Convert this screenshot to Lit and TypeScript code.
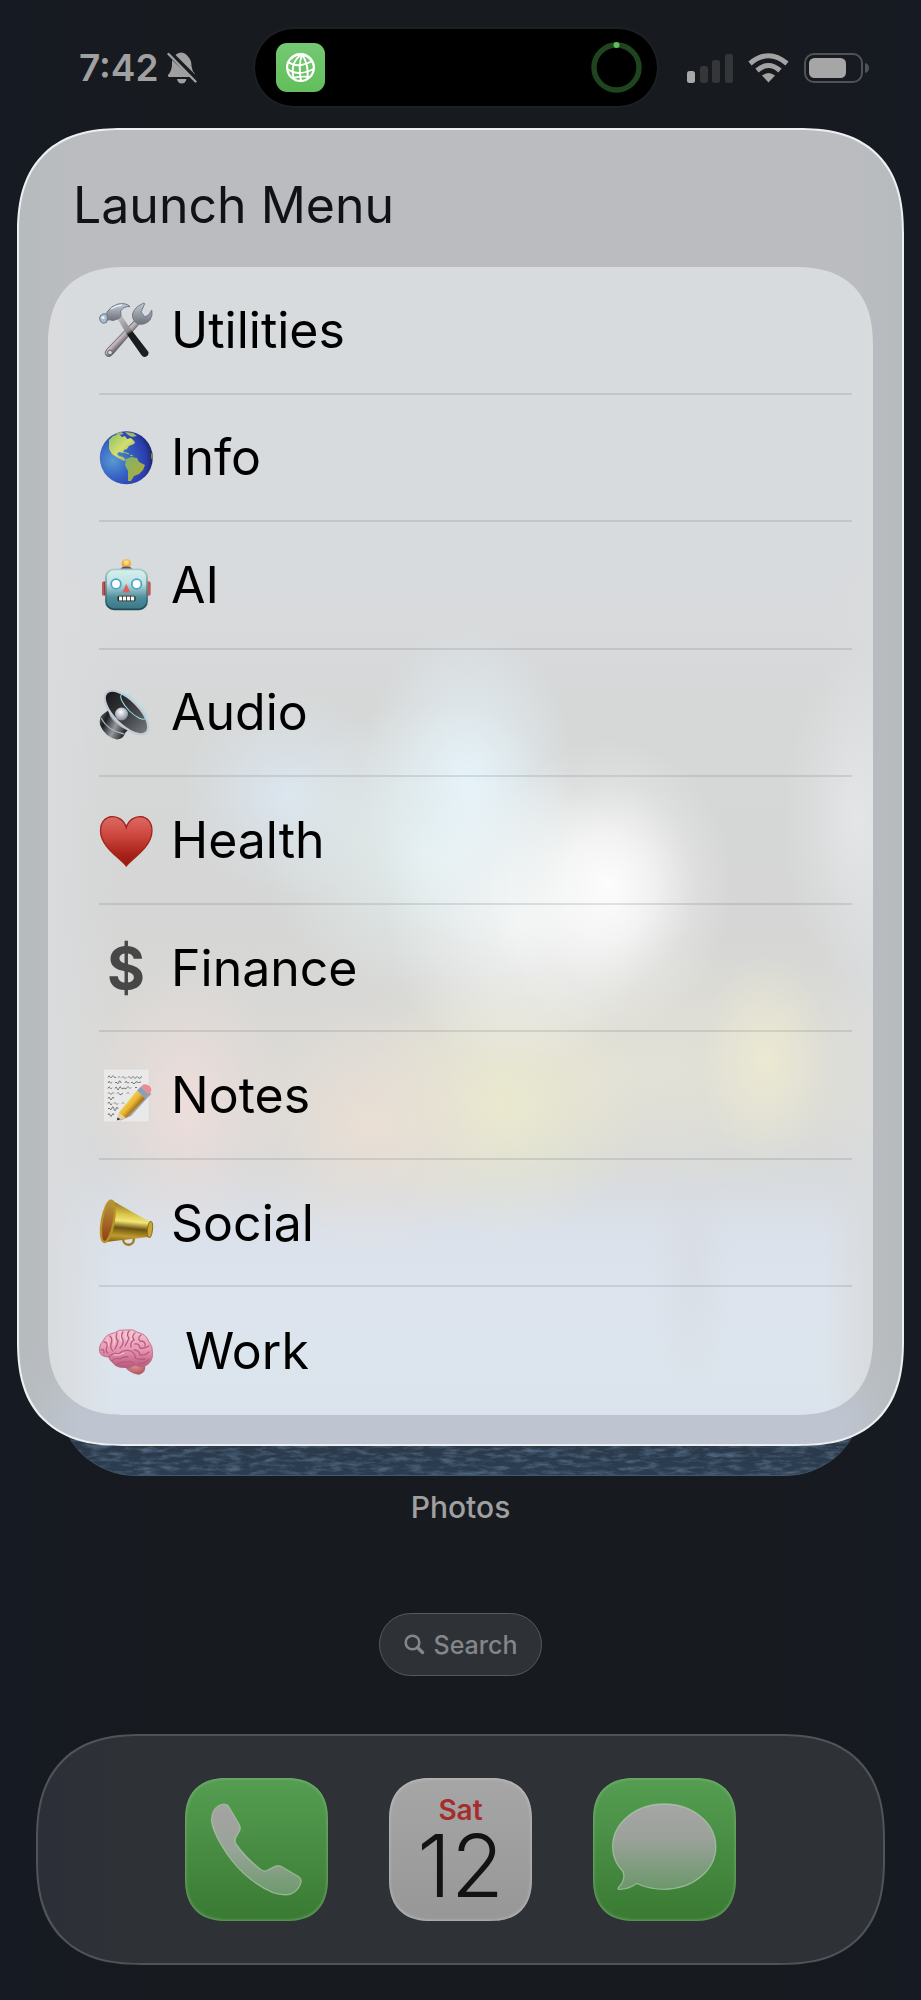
import { LitElement, html, css } from "lit";
import type { TemplateResult } from "lit";
import { customElement, property } from "lit/decorators.js";

const tools = html`<svg viewBox="0 0 54 54" aria-hidden="true">
  <defs>
    <linearGradient id="steel" x1="0" y1="0" x2="0" y2="1"><stop offset="0" stop-color="#c3ccd6" /><stop offset="1" stop-color="#6c717a" /></linearGradient>
    <linearGradient id="shaft" gradientUnits="userSpaceOnUse" x1="16" y1="32" x2="24" y2="40"><stop offset="0" stop-color="#6f6970" /><stop offset=".5" stop-color="#c4bcc2" /><stop offset="1" stop-color="#6b6167" /></linearGradient>
    <linearGradient id="grip" gradientUnits="userSpaceOnUse" x1="22" y1="14" x2="44" y2="50"><stop offset="0" stop-color="#b9b9bb" /><stop offset=".38" stop-color="#8a8a8c" /><stop offset=".45" stop-color="#17181a" /><stop offset="1" stop-color="#1d1f21" /></linearGradient>
  </defs>
  <path d="M36 17 L40 21 L14 51 Q11 55 7.500 53 Q4.500 50.500 7.500 46.500 Z" fill="url(#shaft)" stroke="#625d62" stroke-width=".8" />
  <path d="M42 1.500 Q46 -1 45.500 1 L42 9 L46 14 L50 11.500 L52.800 7 Q54 12 51 17 Q46 22.500 39 21 Q33 18 33.500 11 Q36 4 42 1.500 Z" fill="url(#steel)" stroke="#747c86" stroke-width="1" />
  <circle cx="11" cy="49.500" r="2.300" fill="#d7dbde" stroke="#67676a" stroke-width="1" />
  <path d="M17.500 14 L21.500 11 L31 25 L49.500 49 Q50 53 46 54 Q43.500 54 42 51.500 L27 30 Z" fill="url(#grip)" />
  <path d="M8 9 Q12 3 19 1 Q27 -.5 31 3.500 Q25 3 21.500 8 Q23 13 20 15.500 L14 17.500 Q10 16 7.500 17.500 Z" fill="url(#steel)" stroke="#66717e" stroke-width=".9" />
  <path d="M1.500 12.500 Q4.500 9.500 7.500 11 Q9.500 14.500 7.500 19.500 Q3.500 21.500 1.500 18.500 Q-.5 15.500 1.500 12.500 Z" fill="#a9bccd" stroke="#66717e" stroke-width=".9" />
  <path d="M12 6 Q17 2.500 23 2" stroke="#e8eef4" stroke-width="1.300" fill="none" />
  <circle cx="4" cy="14.500" r="1.600" fill="#eaf5fd" />
</svg>`;

const globe = html`<svg viewBox="0 0 54 54" aria-hidden="true">
  <defs>
    <radialGradient id="sea" cx=".25" cy=".55" r=".75"><stop offset="0" stop-color="#5a9ad2" /><stop offset=".45" stop-color="#3560c4" /><stop offset=".85" stop-color="#2b3cab" /><stop offset="1" stop-color="#1d2667" /></radialGradient>
    <linearGradient id="land" x1="0" y1="0" x2="1" y2="1"><stop offset="0" stop-color="#8fbf62" /><stop offset=".5" stop-color="#d2de71" /><stop offset="1" stop-color="#93a447" /></linearGradient>
    <linearGradient id="landS" x1="0" y1="0" x2="1" y2="1"><stop offset="0" stop-color="#7fb36c" /><stop offset="1" stop-color="#b9aa36" /></linearGradient>
    <clipPath id="ball"><circle cx="27.300" cy="27.800" r="26.500" /></clipPath>
  </defs>
  <circle cx="27.300" cy="27.800" r="26.500" fill="url(#sea)" />
  <g clip-path="url(#ball)">
    <path d="M10 10 L14 6 L20 4 L23 7 L26 6 L28 9 L32 8 L36 12 L35 14 L30 16 L28 19 L25 20 L24 23 L20 22 L18 24 L20 26 L24 27 L27 30 L25 31 L19 28 L13 24 L10 19 Z" fill="url(#land)" />
    <path d="M15 4 L22 2 L25 4 L20 5 Z M26 2 L34 3 L38 6 L33 7 L29 5 Z" fill="#a4b869" />
    <path d="M24 22 L30 24 M31 25 L34 26" stroke="#9bbf6a" stroke-width="1.200" />
    <path d="M27 29 L32 27 L38 28 L40 32 L46 35 L44 40 L40 44 L35 46 L32 51 L29 51 L29 41 L26 35 Z" fill="url(#landS)" />
    <path d="M52 24 L55 20 L55 32 L52 28 Z" fill="#7b8a36" />
  </g>
</svg>`;

const robot = html`<svg viewBox="0 0 54 54" aria-hidden="true">
  <defs>
    <linearGradient id="face" x1="0" y1="0" x2="0" y2="1"><stop offset="0" stop-color="#d6f0ee" /><stop offset=".35" stop-color="#bfe0e2" /><stop offset=".7" stop-color="#508f9d" /><stop offset="1" stop-color="#3b7584" /></linearGradient>
    <linearGradient id="edge" x1="0" y1="0" x2="0" y2="1"><stop offset="0" stop-color="#abcac6" /><stop offset="1" stop-color="#1d4b5a" /></linearGradient>
    <radialGradient id="bulb" cx=".5" cy=".35" r=".6"><stop offset="0" stop-color="#fff08a" /><stop offset="1" stop-color="#e5922c" /></radialGradient>
  </defs>
  <rect x="3" y="23.500" width="5" height="14" rx="1.500" fill="#a83338" />
  <rect x="46.500" y="23.500" width="5" height="14" rx="1.500" fill="#a83338" />
  <path d="M4 24 v13 M50 24 v13" stroke="#dc7c77" stroke-width="1" />
  <circle cx="27.300" cy="5.600" r="4.700" fill="url(#bulb)" />
  <path d="M21.300 11.500 Q22 8.500 27.300 8.500 Q32.500 8.500 33.500 11.500 Z" fill="#5b4a72" />
  <rect x="7" y="11.300" width="41" height="40" rx="8" fill="url(#face)" stroke="url(#edge)" stroke-width="1.800" />
  <circle cx="17" cy="26" r="4.800" fill="#fff" stroke="#48a9c8" stroke-width="1.800" />
  <circle cx="37.600" cy="26" r="4.800" fill="#fff" stroke="#48a9c8" stroke-width="1.800" />
  <path d="M27.300 26 L31.300 34.500 H23.300 Z" fill="#d9625f" />
  <rect x="18.500" y="37.800" width="18" height="5.400" rx="1.500" fill="#202b31" />
  <path d="M20 40.500 H35.500" stroke="#fff8ec" stroke-width="4" stroke-dasharray="3.200 .8" />
</svg>`;

const speaker = html`<svg viewBox="0 0 54 54" aria-hidden="true">
  <defs>
    <linearGradient id="magnet" x1="0" y1="0" x2="1" y2=".5"><stop offset="0" stop-color="#777b80" /><stop offset=".3" stop-color="#1b1d20" /><stop offset=".65" stop-color="#94989e" /><stop offset="1" stop-color="#25272a" /></linearGradient>
    <linearGradient id="cone" x1="0" y1="0" x2="1" y2="0"><stop offset="0" stop-color="#17191b" /><stop offset=".55" stop-color="#3b3e42" /><stop offset="1" stop-color="#75797e" /></linearGradient>
    <radialGradient id="dome" cx=".45" cy=".35" r=".6"><stop offset="0" stop-color="#fff" /><stop offset="1" stop-color="#8b939f" /></radialGradient>
  </defs>
  <path d="M3 30 Q0 33 1 40 Q6 52 18 54.500 Q25 53.500 26 48 L30 44 L11 24 Z" fill="url(#magnet)" />
  <path d="M2 33 Q9 46 25 49" fill="none" stroke="#aab0b8" stroke-width="1.300" />
  <path d="M8 14 Q8 28 13 34 Q22 46 42 48 Z" fill="#a5a9b0" />
  <path d="M10 24 Q16 39 32 45" fill="none" stroke="#f1f2f5" stroke-width="2" />
  <ellipse cx="27.500" cy="27.500" rx="28" ry="12.500" transform="rotate(45 27.500 27.500)" fill="url(#cone)" stroke="#c3cad4" stroke-width="2.200" />
  <circle cx="22.500" cy="29" r="6.500" fill="url(#dome)" />
  <ellipse cx="34.500" cy="21.500" rx="17" ry="6" transform="rotate(45 34.500 21.500)" fill="none" stroke="#9fe2ec" stroke-width="1" />
</svg>`;

const heart = html`<svg viewBox="0 0 54 54" aria-hidden="true">
  <defs><linearGradient id="red" x1="0" y1="0" x2="0" y2="1"><stop offset="0" stop-color="#dd6a63" /><stop offset=".4" stop-color="#cb463e" /><stop offset=".75" stop-color="#a92319" /><stop offset="1" stop-color="#97180e" /></linearGradient></defs>
  <path d="M27.300 53 C21 45 1.500 34 1.500 17.500 C1.500 -.5 23 -.5 27.300 14.500 C31.500 -.5 53 -.5 53 17.500 C53 34 33.500 45 27.300 53 Z" fill="url(#red)" stroke="#a3221a" stroke-width="1.300" />
</svg>`;

const notes = html`<svg viewBox="0 0 54 54" aria-hidden="true">
  <defs><linearGradient id="wood" gradientUnits="userSpaceOnUse" x1="27" y1="32" x2="36" y2="40"><stop offset="0" stop-color="#f6d55c" /><stop offset=".6" stop-color="#e8b42f" /><stop offset="1" stop-color="#a8741c" /></linearGradient></defs>
  <rect x="4.700" y="1" width="45.500" height="53" fill="#e9e9e9" stroke="#d6d6d6" stroke-width=".7" />
  <g fill="none" stroke="#6a6a6a" stroke-width=".9">
    <path d="M9 9.500 q1 -3 2 -.8 t2 0 t2 0 t2 .3 M19 9.500 q1 -2 2 0 M23 9.500 q1 -2 2 0 t2 0 M29 9.500 q1 -2 2 0 t2 0 t2 0 t2 0 t2 0 t4 -.8" />
    <path d="M9 15 q1 -3 2 -.8 t2 0 M16 15 q1 -2 2 0 t2 -1 t2 1 M26 15 q1 -3 2 -.8 t2 0 M32 15 q1 -2 2 0 t2 0 t2 -1 t4 0" />
    <path d="M9 20.500 q1 -3 2 -.8 t2 0 M16 20.500 q1 -3 2 0 t2 0 t2 -1 t2 1 t2 0 t2 -1 t2 0 t2 0 M36 20 q1 -2 2 0" />
    <path d="M9 25.500 q1 -2 2 0 t2 0 t2 0 M18 25.500 q1 -2 2 0 t2 1 t2 -1 M28 25.500 q1 -2 2 0" />
    <path d="M9 30.500 q1 -3 2 0 t2 0 t2 0" />
    <path d="M9 35.500 q1 -3 2 0 t2 0 M15 35.500 q1 -2 2 0 t2 0 M23 35.500 q1 -2 2 0" />
    <path d="M9 41 q1 -2 2 0 t2 -1 t2 1 t2 0 t2 0" />
    <path d="M9 47 q1 -3 2 0 t2 0 t2 0" />
  </g>
  <path d="M20 53 L32 48 L52 26 L50 22 Z" fill="#000" opacity=".3" />
  <path d="M19.500 45 L38 22.500 L46 30.500 L27 50 Z" fill="url(#wood)" />
  <path d="M19.500 45 L27 50 L18 52.300 Z" fill="#e8cfa0" />
  <path d="M18.600 49.500 L21.500 51.300 L17.800 52.600 Z" fill="#2c2c2c" />
  <path d="M38 22.500 L42 18.500 L49.500 26 L46 30.500 Z" fill="#8e9db8" />
  <path d="M42 18.500 Q45.500 14.500 50.500 18 Q55 22.500 49.500 26.500 Z" fill="#e88d93" />
</svg>`;

const megaphone = html`<svg viewBox="0 0 54 54" aria-hidden="true">
  <defs>
    <linearGradient id="gold" x1=".1" y1="0" x2="0" y2="1"><stop offset="0" stop-color="#8d7420" /><stop offset=".3" stop-color="#dcc84a" /><stop offset=".45" stop-color="#f3e676" /><stop offset=".62" stop-color="#6b5412" /><stop offset=".82" stop-color="#c19c2c" /><stop offset="1" stop-color="#7a5b12" /></linearGradient>
    <linearGradient id="bell" x1="0" y1="0" x2="0" y2="1"><stop offset="0" stop-color="#b39a3c" /><stop offset=".5" stop-color="#a8682a" /><stop offset="1" stop-color="#8c3f16" /></linearGradient>
  </defs>
  <circle cx="29.500" cy="43.500" r="5.300" fill="none" stroke="#a07f24" stroke-width="2.400" />
  <path d="M14 5 L50 25.500 L49 41 L7 46 Z" fill="url(#gold)" />
  <ellipse cx="8.800" cy="25.300" rx="6" ry="21" transform="rotate(10 8.800 25.300)" fill="url(#bell)" stroke="#b89428" stroke-width="2.300" />
  <ellipse cx="51" cy="33.500" rx="2.500" ry="8" transform="rotate(6 51 33.500)" fill="#c9a536" stroke="#8f6f1b" stroke-width="1" />
</svg>`;

const brain = html`<svg viewBox="0 0 54 54" aria-hidden="true">
  <defs>
    <linearGradient id="lobe" x1="0" y1="0" x2="0" y2="1"><stop offset="0" stop-color="#f6c6d2" /><stop offset=".5" stop-color="#e999b3" /><stop offset="1" stop-color="#b8567a" /></linearGradient>
    <radialGradient id="stem" cx=".5" cy=".3" r=".7"><stop offset="0" stop-color="#dc8a8c" /><stop offset="1" stop-color="#a8525f" /></radialGradient>
  </defs>
  <path d="M26 43 Q35 38 46 41 Q48 48 40 50.800 Q30 49 26 43 Z" fill="url(#stem)" />
  <path d="M1 29 Q-1 22 4 17 Q7 10 15 9 Q20 5 27 6 Q34 4.500 39 8.500 Q47 10 49.500 17 Q54 22 53.500 29 Q54 37 48 41 Q42 44 36 41 Q30 45 24 43.500 Q17 43.500 13 38 Q10 36 10 33 Q3 33 1 29 Z" fill="url(#lobe)" stroke="#bb6281" stroke-width=".8" />
  <g fill="none" stroke="#b75c80" stroke-width="1.300" stroke-linecap="round">
    <path d="M5 18 Q9 18 8 23 Q6 27 9 29 M11 12 Q14 15 12 20 Q11 25 14 27 M18 9 Q16 14 19 17 Q18 22 16 25" />
    <path d="M24 8 Q21 12 24 16 Q25 20 21 24 M30 7 Q27 11 30 14 Q28 19 26 22 M36 9 Q32 12 35 16 Q31 18 32 23" />
    <path d="M42 11 Q38 14 41 17 Q47 17 46 22 M36 20 Q40 19 41 24 Q45 25 50 22 M35 26 Q40 26 41 31 Q46 32 50 28" />
    <path d="M10 33 Q14 28 20 30 Q25 25 32 27 Q37 30 36 34 Q40 36 46 35" />
    <path d="M13 37 Q17 33 21 35 Q25 32 29 33 M17 41 Q22 37 27 38 Q32 36 35 40 M2 26 Q5 24 5 29 M40 39 Q46 40 50 35" />
  </g>
  <g fill="none" stroke="#fbdbe4" stroke-width="1" stroke-linecap="round" opacity=".8">
    <path d="M15 12 Q16 17 15 21 M21.500 10 Q21 14 22 17 M27 9 Q26 13 27.500 16 M33 9 Q31 13 32.500 16 M8 15 Q10 18 9.500 22 M15 31 Q20 32 25 29" />
  </g>
</svg>`;

interface Entry {
  label: string;
  icon: TemplateResult;
}

const entries: Entry[] = [
  { label: "Utilities", icon: tools },
  { label: "Info", icon: globe },
  { label: "AI", icon: robot },
  { label: "Audio", icon: speaker },
  { label: "Health", icon: heart },
  { label: "Finance", icon: html`<span class="dollar" aria-hidden="true">$</span>` },
  { label: "Notes", icon: notes },
  { label: "Social", icon: megaphone },
  { label: " Work", icon: brain },
];

const corners = css`
  .r {
    border-radius: var(--radius);
  }
  @supports (corner-shape: superellipse(1.3)) {
    .r {
      border-radius: calc(var(--radius) * 1.2);
      corner-shape: superellipse(1.3);
    }
  }
`;

@customElement("status-bar")
class StatusBar extends LitElement {
  static styles = css`
    :host {
      display: grid;
      grid-template-columns: 1fr 402px 1fr;
      align-items: center;
      padding: 29px 52px 0 43px;
      color: #a0a0a0;
    }
    svg {
      display: block;
      flex: none;
    }
    .left {
      display: flex;
      align-items: center;
      gap: 8px;
      padding-left: 36px;
      font-size: 37px;
      line-height: 44px;
      font-weight: 600;
    }
    .island {
      display: flex;
      align-items: center;
      justify-content: space-between;
      box-sizing: border-box;
      height: 77px;
      padding: 0 15px 0 21px;
      border-radius: 39px;
      background: #000;
      box-shadow: 0 0 0 2px #1c1f24;
    }
    .right {
      display: flex;
      align-items: center;
      justify-content: flex-end;
      gap: 15px;
    }
  `;

  render() {
    return html`
      <div class="left">
        <time>7:42</time>
        <svg width="30" height="32" viewBox="0 0 30 32" role="img" aria-label="Silent mode">
          <path d="M5 8 L23.500 25 H3 Q.5 25 1 23 Q5 19 5 12 Z" fill="#a0a0a0" />
          <path d="M6 6 Q8.500 1 14.500 .5 Q18.500 1 21 4.500 Q24.500 8 24.500 14 Q25 19 28 22 L27 25 H21 Z" fill="#a0a0a0" />
          <path d="M10 27 H19.500 Q18.500 31.500 14.700 31.500 Q11 31.500 10 27 Z" fill="#a0a0a0" />
          <path d="M2.500 .5 L30.500 28.500" stroke="#181b20" stroke-width="5" />
          <path d="M1.500 2 L28.500 29.500" stroke="#a0a0a0" stroke-width="2.400" stroke-linecap="round" />
        </svg>
      </div>
      <div class="island">
        <svg width="49" height="49" viewBox="0 0 49 49" role="img" aria-label="Web activity">
          <defs><linearGradient id="act" x1="0" y1="0" x2="0" y2="1"><stop offset="0" stop-color="#74c872" /><stop offset="1" stop-color="#62bf5c" /></linearGradient></defs>
          <rect width="49" height="49" rx="11" fill="url(#act)" />
          <g fill="none" stroke="#fff" stroke-width="1.900">
            <circle cx="24.500" cy="24.500" r="13.400" stroke-width="2.200" />
            <path d="M12 19 Q22 26 36 18 M11.500 26 Q22 34 37.500 26 M17 35 Q25 33 34 34" />
            <path d="M26 11 Q14 19 17.500 35 M26 11 Q22 24 25 38 M26 11 Q33 22 31.500 36 M26 11 Q36 15 37.500 22 M24 11 Q17 13 14 17" />
          </g>
        </svg>
        <svg width="51" height="51" viewBox="0 0 51 51" role="img" aria-label="Progress">
          <circle cx="25.500" cy="25.500" r="22.500" fill="none" stroke="#1f451f" stroke-width="5.400" />
          <circle cx="25.500" cy="3" r="3" fill="#5cbf58" />
        </svg>
      </div>
      <div class="right">
        <svg width="46" height="30" viewBox="0 0 46 30" role="img" aria-label="Signal, one bar">
          <rect x="0" y="18" width="8" height="12" rx="2.500" fill="#a8a8a8" />
          <rect x="13" y="13" width="8" height="17" rx="2.500" fill="#34363a" />
          <rect x="25" y="7" width="8" height="23" rx="2.500" fill="#34363a" />
          <rect x="38" y="1" width="8" height="29" rx="2.500" fill="#34363a" />
        </svg>
        <svg width="41" height="30" viewBox="0 0 41 30" role="img" aria-label="Wi-Fi">
          <g fill="none" stroke="#a3a3a3" stroke-width="5">
            <path d="M2 10.500 Q20.500 -5 39 10.500" />
            <path d="M9 17.500 Q20.500 7.500 32 17.500" />
          </g>
          <path d="M14 22.500 Q20.500 17.500 27 22.500 L20.500 29.500 Z" fill="#a3a3a3" />
        </svg>
        <svg width="65" height="30" viewBox="0 0 65 30" role="img" aria-label="Battery">
          <rect x="1" y="1" width="57" height="28" rx="9" fill="none" stroke="#505256" stroke-width="2" />
          <rect x="5" y="5" width="37" height="20" rx="5.500" fill="#a6a6a6" />
          <path d="M61 10 Q65 11 65 15 Q65 19 61 20 Z" fill="#505256" />
        </svg>
      </div>
    `;
  }
}

@customElement("launch-menu")
class LaunchMenu extends LitElement {
  @property({ attribute: false }) items: Entry[] = [];

  static styles = [
    corners,
    css`
      :host {
        display: block;
        position: relative;
        z-index: 1;
        padding: 22px 17px 0;
      }
      .panel {
        --radius: 88px;
        padding: 45px 29px 29px;
        border: 2px solid #eceff2;
        background:
          linear-gradient(90deg, #b6bbbe 0, transparent 60px, transparent calc(100% - 60px), #b6bbbe 100%),
          linear-gradient(#bbbcc0 0, #bbbcc0 92%, #bec5d0 98%);
      }
      h1 {
        margin: 0;
        padding: 0 0 32px 25px;
        font-size: 50px;
        line-height: 60px;
        font-weight: 400;
        color: #111216;
      }
      ul {
        --radius: 66px;
        display: grid;
        grid-auto-rows: 1fr;
        min-height: 1148px;
        margin: 0;
        padding: 0 21px 0 51px;
        list-style: none;
        background:
          radial-gradient(15% 13% at 68% 54%, #ffffffee 0, #ffffffaa 35%, #ffffff33 70%, #ffffff00 100%),
          radial-gradient(16% 13% at 57% 57%, #f8fafacc 0, #f8fafa55 55%, #f8fafa00 100%),
          radial-gradient(13% 14% at 51% 45%, #e6f4fbee 0, #e6f4fb66 55%, #e6f4fb00 100%),
          radial-gradient(20% 13% at 46% 51%, #e4f0f0dd 0, #e4f0f066 55%, #e4f0f000 100%),
          radial-gradient(13% 9% at 29% 46%, #dce8f3dd 0, #dce8f355 55%, #dce8f300 100%),
          radial-gradient(9% 14% at 98% 48%, #e4e6e8ee 0, #e4e6e855 60%, #e4e6e800 100%),
          radial-gradient(12% 12% at 17% 73%, #f0dedbdd 0, #f0dedb55 55%, #f0dedb00 100%),
          radial-gradient(17% 11% at 39% 75%, #ece0d4dd 0, #ece0d455 55%, #ece0d400 100%),
          radial-gradient(17% 12% at 55% 73%, #ecebcddd 0, #ecebcd55 55%, #ecebcd00 100%),
          radial-gradient(8% 9% at 87% 69%, #eeecd0cc 0, #eeecd055 55%, #eeecd000 100%),
          radial-gradient(40% 11% at 72% 70%, #e4e3d7dd 0, #e4e3d755 60%, #e4e3d700 100%),
          radial-gradient(5% 12% at 78% 87%, #d6dae088 0, #d6dae000 100%),
          linear-gradient(90deg, #d9dbdd 0, #d9dbdd00 8%, #d9dbdd00 94%, #d9dbdd 100%),
          linear-gradient(
            #d7dbde 0,
            #d7dbde 25%,
            #d8dadc 30%,
            #d6d8d8 38%,
            #d5d6d5 56%,
            #dad9d6 67%,
            #dad9d6 73%,
            #d7d9da 78%,
            #dbe1ea 84%,
            #dde4ed 90%,
            #dbe4ec 100%
          );
      }
      li {
        display: grid;
        border-bottom: 2px solid #4a505a26;
      }
      li:last-child {
        border-bottom: 0;
      }
      button {
        display: flex;
        align-items: center;
        gap: 18px;
        padding: 0;
        border: 0;
        background: none;
        color: #000;
        font: inherit;
        font-size: 50px;
        line-height: 60px;
        text-align: left;
        white-space: pre;
      }
      .icon {
        display: grid;
        place-items: center;
        flex: none;
        width: 54px;
        height: 54px;
      }
      .icon svg {
        display: block;
        width: 54px;
        height: 54px;
        overflow: visible;
      }
      .dollar {
        font-weight: 700;
        font-size: 58px;
        line-height: 54px;
        color: #474747;
      }
    `,
  ];

  render() {
    return html`
      <section class="panel r" aria-labelledby="title">
        <h1 id="title">Launch Menu</h1>
        <ul class="r">
          ${this.items.map(
            (item) => html`<li>
              <button type="button"><span class="icon">${item.icon}</span><span>${item.label}</span></button>
            </li>`
          )}
        </ul>
      </section>
    `;
  }
}

@customElement("app-dock")
class AppDock extends LitElement {
  static styles = [
    corners,
    css`
      :host {
        display: block;
        padding: 58px 36px 34px;
      }
      nav {
        --radius: 88px;
        display: flex;
        align-items: center;
        justify-content: center;
        gap: 61px;
        padding: 42px;
        border: 2px solid #505358;
        background: linear-gradient(90deg, #2c2f38 0, #2e3136 10%, #2e3136 100%);
      }
      button {
        --radius: 36px;
        display: block;
        box-sizing: border-box;
        width: 143px;
        height: 143px;
        padding: 0;
        border: 0;
        font: inherit;
        overflow: hidden;
      }
      .green {
        background: linear-gradient(#559e52, #3a7a33);
        box-shadow: inset 0 0 3px 1px #8cc08a88;
      }
      .calendar {
        display: flex;
        flex-direction: column;
        align-items: center;
        padding-top: 16px;
        background: linear-gradient(#a6a6a6, #979797);
        box-shadow: inset 0 0 3px 1px #c4c4c4aa;
      }
      .day {
        font-size: 28px;
        line-height: 32px;
        font-weight: 600;
        color: #a52e2c;
      }
      .date {
        font-size: 86px;
        line-height: 80px;
        font-weight: 300;
        color: #131313;
      }
      svg {
        display: block;
      }
    `,
  ];

  render() {
    return html`
      <nav class="r" aria-label="Dock">
        <button class="green r" type="button" aria-label="Phone">
          <svg width="143" height="143" viewBox="0 0 143 143" aria-hidden="true">
            <defs><linearGradient id="ph" x1="0" y1="0" x2="0" y2="1"><stop offset="0" stop-color="#a5a3a4" /><stop offset=".5" stop-color="#98a498" /><stop offset="1" stop-color="#6d9a6c" /></linearGradient></defs>
            <path
              d="M33.700 27.700 Q38 25.500 40.700 26.500 Q42.500 26.800 43.700 28.700 L54 46 Q55.800 49 55 52 L50.600 60 Q49.500 63 51 66 Q61 80 75 91 Q78.500 93.800 81.500 92.700 L90 88.300 Q93 87 96 88.300 L113.500 98.500 Q116.500 100.500 116.200 103.700 Q114.500 110.500 109.500 114 Q105.500 117 101 116.700 Q94.500 117 88 114.700 Q73 108.500 58.500 95.300 Q45.500 83 36.300 67 Q28 53 26.600 43.700 Q26 32 33.700 27.700 Z"
              fill="url(#ph)" stroke="#b9cdb8" stroke-opacity=".6" stroke-width="1.300" />
          </svg>
        </button>
        <button class="calendar r" type="button">
          <span class="day">Sat</span>
          <span class="date">12</span>
        </button>
        <button class="green r" type="button" aria-label="Messages">
          <svg width="143" height="143" viewBox="0 0 143 143" aria-hidden="true">
            <defs><linearGradient id="ms" x1="0" y1="0" x2="0" y2="1"><stop offset="0" stop-color="#a5a5a5" /><stop offset=".4" stop-color="#9ba29a" /><stop offset="1" stop-color="#6b976a" /></linearGradient></defs>
            <path
              d="M71.200 26 C100 26 122.800 45 122.800 68.700 C122.800 92.300 100 111.300 71.200 111.300 C61 111.300 51.500 109 43.700 105.500 Q34.500 112 25.500 111.300 Q24.500 110.800 25.500 109.500 Q33 102 30 93.500 C23.500 87 19.600 78 19.600 68.700 C19.600 45 42.500 26 71.200 26 Z"
              fill="url(#ms)" stroke="#bad2b9" stroke-opacity=".6" stroke-width="1.300" />
          </svg>
        </button>
      </nav>
    `;
  }
}

@customElement("app-root")
class AppRoot extends LitElement {
  static styles = css`
    :host {
      display: flex;
      flex-direction: column;
      min-height: 100vh;
      background: linear-gradient(90deg, #161a22 0, #171a1f 18%, #171a1f 82%, #161a22 100%);
      font-family: Inter, "Liberation Sans", sans-serif;
      -webkit-font-smoothing: antialiased;
    }
    .widget {
      height: 99px;
      margin: -70px 58px 0;
      overflow: hidden;
      border-bottom: 1px solid #41586b;
      border-radius: 0 0 78px 78px;
      background: linear-gradient(#2b3a4b 70%, #2a3d51);
    }
    .widget svg {
      display: block;
      width: 100%;
      height: 100%;
    }
    .caption {
      margin: 13px 0 0;
      text-align: center;
      font-size: 30px;
      line-height: 36px;
      font-weight: 500;
      color: #a0a0a0;
    }
    .search {
      display: flex;
      align-items: center;
      align-self: center;
      gap: 9px;
      height: 63px;
      margin-top: 88px;
      padding: 0 24px;
      border: 1px solid #565a5f;
      border-radius: 32px;
      background: #2e3136;
      color: #858688;
      font: inherit;
      font-size: 25px;
      line-height: 30px;
      font-weight: 500;
    }
  `;

  render() {
    return html`
      <status-bar></status-bar>
      <launch-menu .items=${entries}></launch-menu>
      <div class="widget">
        <svg aria-hidden="true">
          <filter id="water" x="0" y="0" width="100%" height="100%">
            <feTurbulence type="fractalNoise" baseFrequency=".06 .22" numOctaves="4" seed="8" />
            <feColorMatrix values="0 0 0 0 .09  0 0 0 0 .14  0 0 0 0 .21  2.2 0 0 0 -.95" />
          </filter>
          <rect width="100%" height="100%" filter="url(#water)" />
        </svg>
      </div>
      <p class="caption">Photos</p>
      <button class="search" type="button">
        <svg width="21" height="21" viewBox="0 0 21 21" aria-hidden="true">
          <circle cx="8.500" cy="8.500" r="6.800" fill="none" stroke="currentColor" stroke-width="2.600" />
          <path d="M13.500 13.500 L18.500 18.500" stroke="currentColor" stroke-width="3.400" stroke-linecap="round" />
        </svg>
        Search
      </button>
      <app-dock></app-dock>
    `;
  }
}
